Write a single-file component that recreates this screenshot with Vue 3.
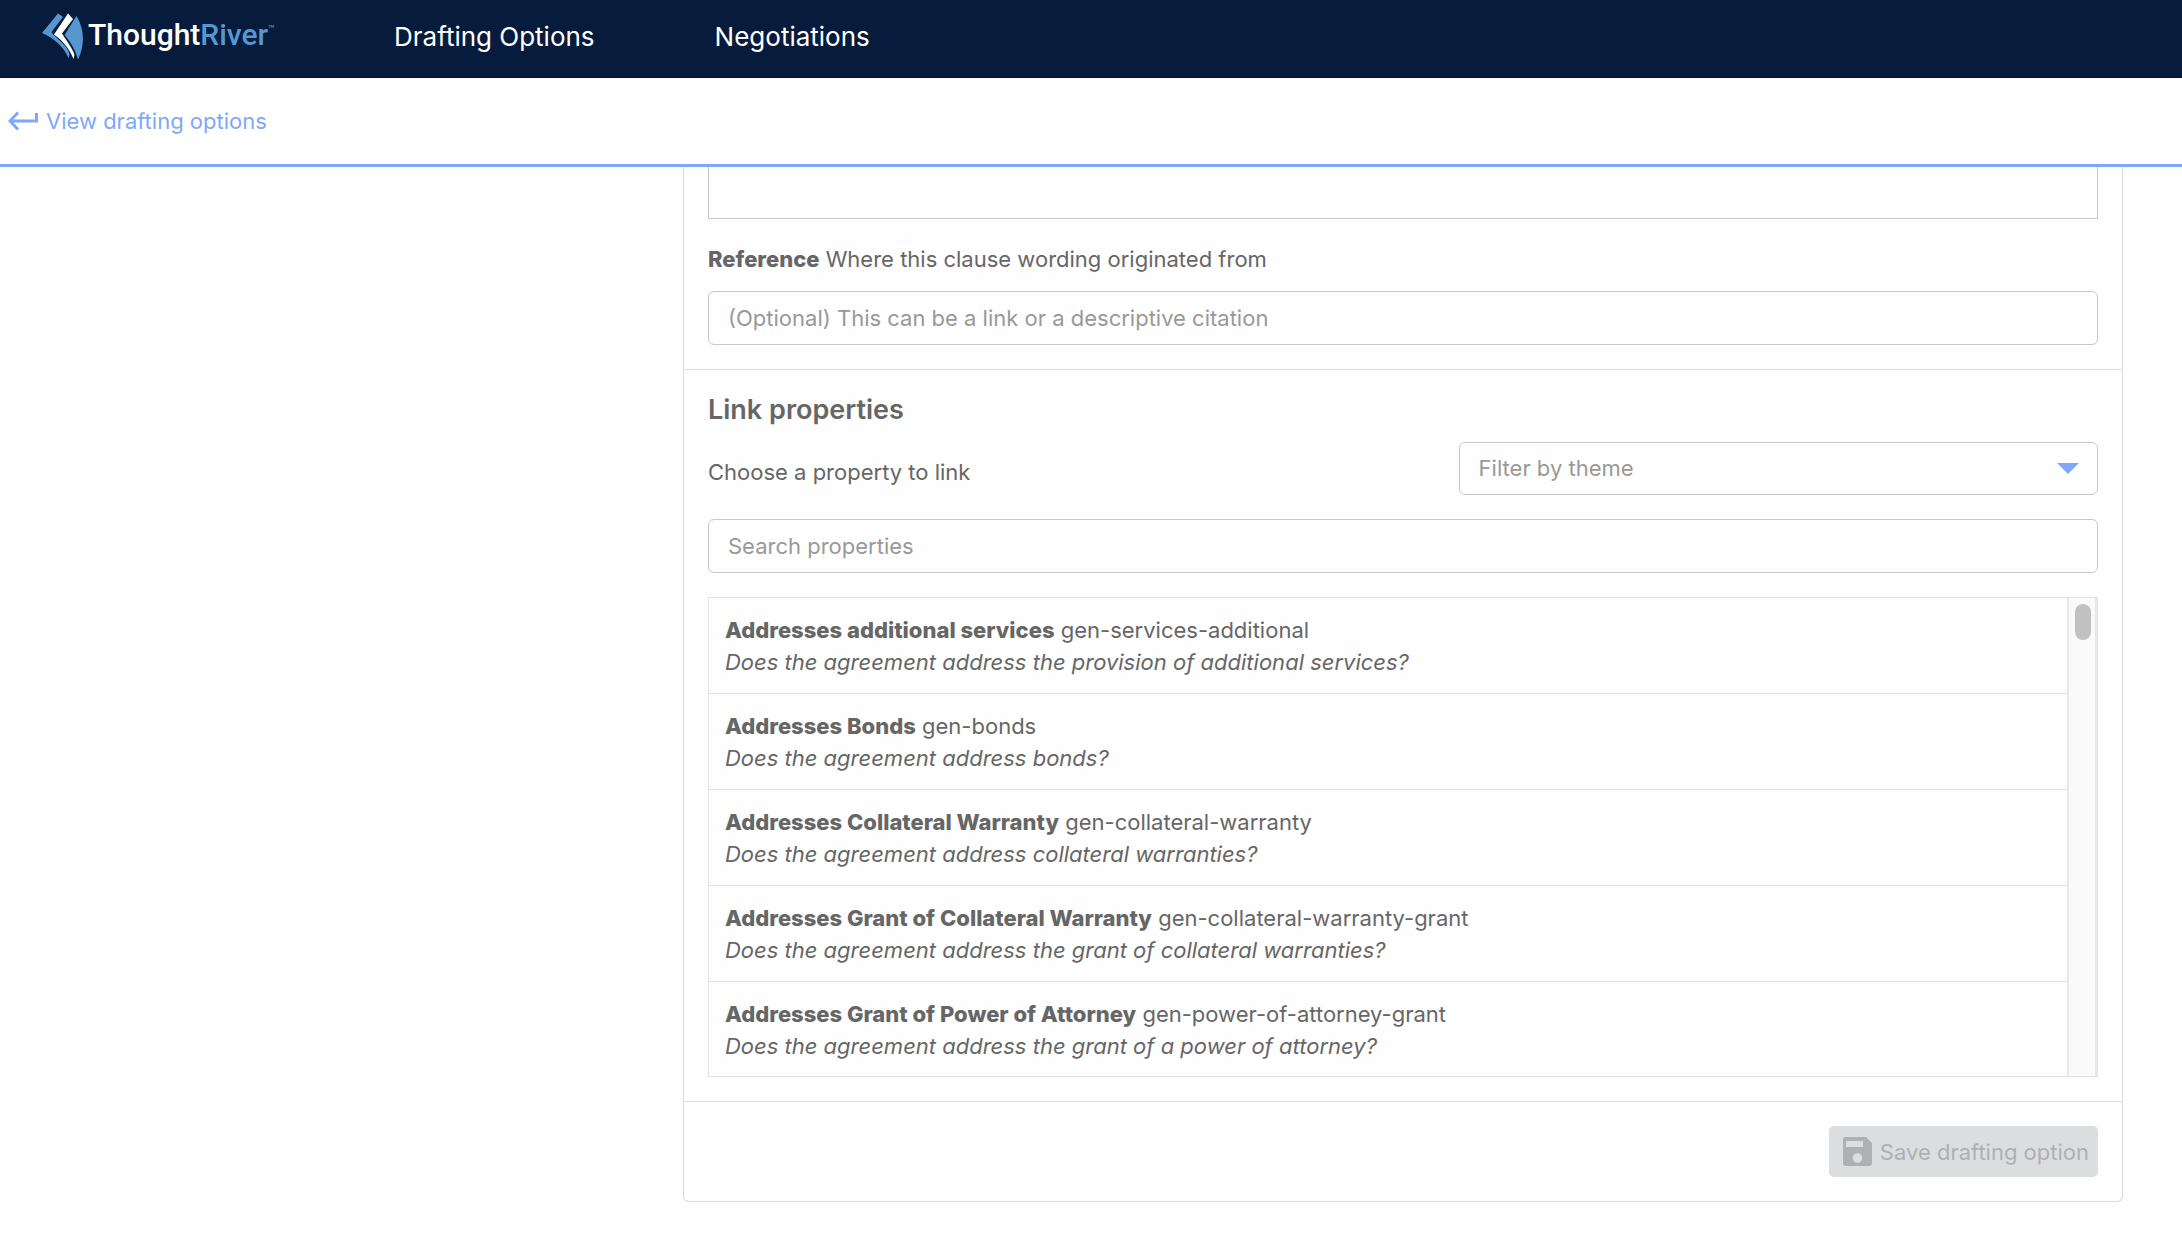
<script setup>
import { ref } from 'vue'

const wording = ref('')
const reference = ref('')
const theme = ref('')
const search = ref('')

const properties = [
  { name: 'Addresses additional services', slug: 'gen-services-additional', question: 'Does the agreement address the provision of additional services?' },
  { name: 'Addresses Bonds', slug: 'gen-bonds', question: 'Does the agreement address bonds?' },
  { name: 'Addresses Collateral Warranty', slug: 'gen-collateral-warranty', question: 'Does the agreement address collateral warranties?' },
  { name: 'Addresses Grant of Collateral Warranty', slug: 'gen-collateral-warranty-grant', question: 'Does the agreement address the grant of collateral warranties?' },
  { name: 'Addresses Grant of Power of Attorney', slug: 'gen-power-of-attorney-grant', question: 'Does the agreement address the grant of a power of attorney?' },
]
</script>

<template>
  <div class="page">
    <header class="topbar">
      <a class="logo" href="#">
        <svg class="logo-mark" viewBox="0 0 42 48" aria-hidden="true">
          <path fill="#5797d1" d="M16 0.500L21 4L9.500 19C10 22 27 33 27.500 41.500L26.500 45C22 34 12 25 0 20Z" />
          <path fill="#fff" d="M26 0.500L31 6L20 20.500C24 27 31 36 32.500 42L31.500 46C27 35 20 27 12 21.500Z" />
          <path fill="#5797d1" d="M34.500 3C42.500 16 43 32 36 46.500C33.500 37 28 28 22.500 22Z" />
        </svg>
        <span class="logo-text">Thought<span class="logo-accent">River</span></span><span class="logo-tm">™</span>
      </a>
      <nav class="nav">
        <a href="#">Drafting Options</a>
        <a href="#">Negotiations</a>
      </nav>
    </header>

    <div class="subbar">
      <a class="back" href="#">
        <svg class="back-icon" viewBox="0 0 30 20" aria-hidden="true">
          <path fill="none" stroke="currentColor" stroke-width="3" d="M10 1.500L2 10L10 18.500M2 10H28.500V2" />
        </svg>
        View drafting options
      </a>
    </div>

    <main class="main">
      <form class="card" @submit.prevent>
        <section class="section first">
          <textarea v-model="wording" class="wording" aria-label="Clause wording"></textarea>
          <label class="label" for="reference"><strong>Reference</strong> Where this clause wording originated from</label>
          <input id="reference" v-model="reference" class="field" type="text" placeholder="(Optional) This can be a link or a descriptive citation">
        </section>

        <section class="section">
          <h2>Link properties</h2>
          <div class="choose">
            <label class="choose-label" for="search">Choose a property to link</label>
            <div class="select-wrap">
              <select v-model="theme" class="field select" aria-label="Filter by theme">
                <option value="">Filter by theme</option>
              </select>
              <svg class="caret" viewBox="0 0 22 11" aria-hidden="true"><path fill="#7fa8f9" d="M0 0H22L11 11Z" /></svg>
            </div>
          </div>
          <input id="search" v-model="search" class="field search" type="text" placeholder="Search properties">
          <div class="list">
            <ul class="rows">
              <li v-for="p in properties" :key="p.slug">
                <strong>{{ p.name }}</strong> {{ p.slug }}
                <em>{{ p.question }}</em>
              </li>
            </ul>
            <div class="track"><div class="thumb"></div></div>
          </div>
        </section>

        <footer class="section actions">
          <button class="save" type="submit" disabled>
            <svg class="save-icon" viewBox="0 0 29 29" aria-hidden="true">
              <path fill="currentColor" fill-rule="evenodd" d="M3 0H23L29 6V26A3 3 0 0 1 26 29H3A3 3 0 0 1 0 26V3A3 3 0 0 1 3 0ZM3 4V10H20V4ZM14.500 16.200A4.800 4.800 0 1 0 14.500 25.800A4.800 4.800 0 1 0 14.500 16.200Z" />
            </svg>
            Save drafting option
          </button>
        </footer>
      </form>
    </main>
  </div>
</template>

<style>
body {
  background: #fefefe;
}
</style>

<style scoped>
.page {
  font-family: Inter, "Liberation Sans", sans-serif;
  font-size: 22px;
  line-height: 32px;
  color: #666;
}
.page * {
  box-sizing: border-box;
}
a {
  color: inherit;
  text-decoration: none;
}
strong {
  font-weight: 800;
}
.topbar {
  display: flex;
  align-items: center;
  height: 78px;
  padding: 0 42px 4px;
  background: #071c3c;
  border-bottom: 1px solid #04122f;
  color: #fff;
}
.logo {
  display: flex;
  align-items: center;
  width: 352px;
}
.logo-mark {
  width: 42px;
  height: 48px;
}
.logo-text {
  margin-left: 4px;
  padding-bottom: 4px;
  font-family: Roboto, sans-serif;
  font-size: 30px;
  font-weight: 500;
}
.logo-accent {
  color: #5797d1;
}
.logo-tm {
  align-self: flex-start;
  font-size: 10px;
  line-height: 32px;
  color: #5797d1;
}
.nav {
  display: flex;
  gap: 120px;
  font-size: 26px;
}
.subbar {
  display: flex;
  align-items: center;
  height: 89px;
  padding: 0 8px;
  background: #fff;
  border-bottom: 3px solid #7fa8f9;
}
.back {
  display: flex;
  align-items: center;
  gap: 8px;
  color: #7fa8f9;
}
.back-icon {
  width: 30px;
  height: 20px;
}
.main {
  display: grid;
  grid-template-columns: 683fr 1440fr 59fr;
}
.card {
  grid-column: 2;
  min-width: 0;
  border: 1px solid #dcdddf;
  border-top: 0;
  border-radius: 0 0 6px 6px;
}
.section {
  display: flex;
  flex-direction: column;
  padding: 24px;
  border-top: 1px solid #dcdddf;
}
.section.first {
  padding-top: 0;
  border-top: 0;
}
.wording {
  height: 52px;
  border: 1px solid #c8c8c8;
  border-top: 0;
  background: transparent;
  resize: none;
  font: inherit;
}
.label {
  margin: 24px 0 16px;
}
.field {
  width: 100%;
  height: 54px;
  padding: 0 19px;
  border: 1px solid #c8c8c8;
  border-radius: 6px;
  background: transparent;
  font: inherit;
  color: #999;
}
.field::placeholder {
  color: #999;
  opacity: 1;
}
h2 {
  margin: 0 0 16px;
  font-size: 27px;
  font-weight: 600;
  line-height: 32px;
}
.choose {
  display: flex;
  align-items: center;
  justify-content: space-between;
}
.choose-label {
  padding-top: 6px;
}
.select-wrap {
  position: relative;
  width: 46%;
}
.select {
  display: block;
  height: 53px;
  padding-bottom: 2px;
  appearance: none;
}
.caret {
  position: absolute;
  top: 21px;
  right: 19px;
  width: 22px;
  height: 11px;
  pointer-events: none;
}
.search {
  margin: 24px 0;
}
.list {
  display: flex;
  height: 480px;
  border: 1px solid #e2e2e2;
  overflow: hidden;
}
.rows {
  flex: 1;
  margin: 0;
  padding: 0;
  list-style: none;
}
.rows li {
  height: 96px;
  padding: 16px;
  border-bottom: 1px solid #e2e2e2;
}
em {
  display: block;
}
.track {
  width: 30px;
  padding: 6px;
  background: #fafafa;
  border: solid #e8e8e8;
  border-width: 0 2px;
}
.thumb {
  width: 16px;
  height: 36px;
  border-radius: 8px;
  background: #c1c1c1;
}
.actions {
  align-items: flex-end;
}
.save {
  display: flex;
  align-items: center;
  gap: 8px;
  height: 51px;
  padding: 0 9px 0 14px;
  border: 0;
  border-radius: 5px;
  background: #dcdddf;
  font: inherit;
  color: #afb0b2;
}
.save-icon {
  width: 29px;
  height: 29px;
}
</style>
